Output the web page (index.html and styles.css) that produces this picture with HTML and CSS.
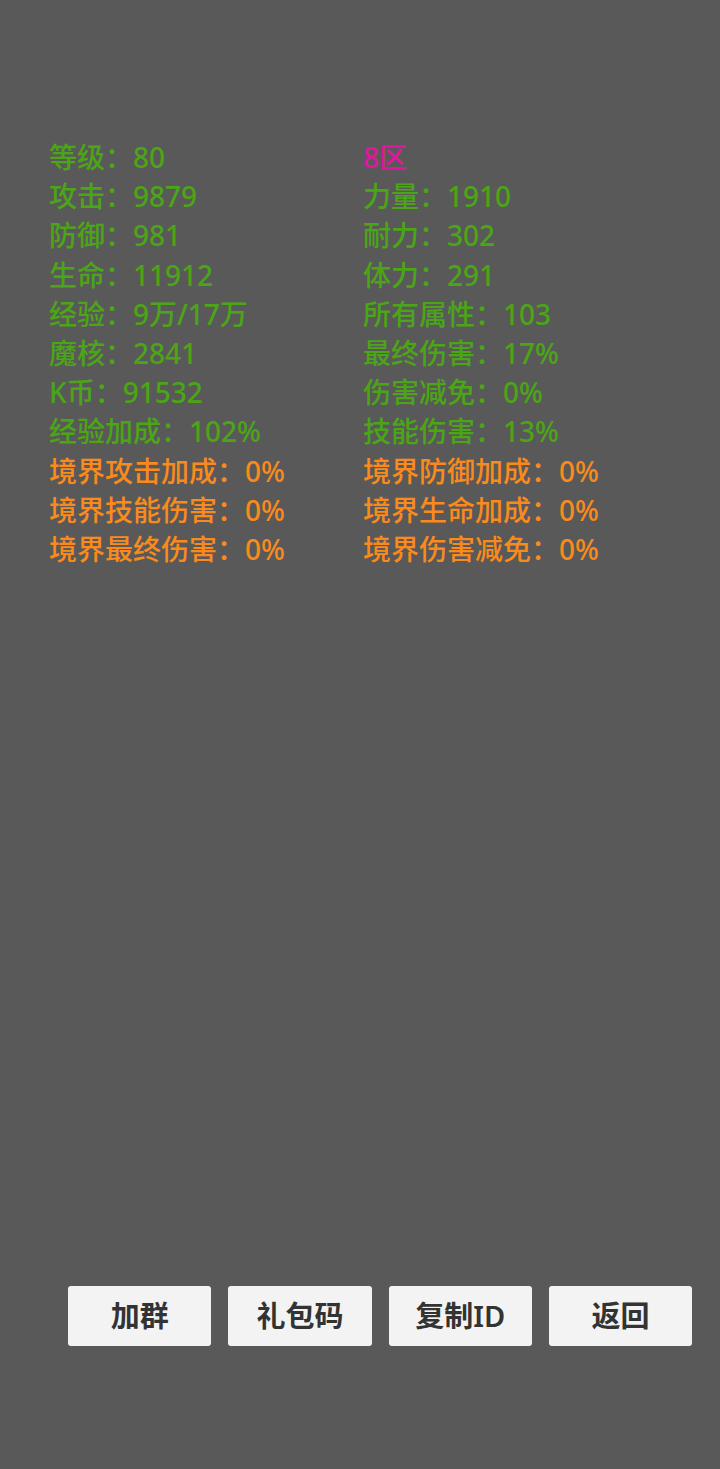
FILE: index.html
```html
<!DOCTYPE html>
<html lang="zh">
<head>
<meta charset="utf-8">
<title>角色信息</title>
<link rel="stylesheet" href="styles.css">
</head>
<body>
<div class="page">
  <div class="stats">
    <div class="cell green">等级：80</div>
    <div class="cell magenta">8区</div>
    <div class="cell green">攻击：9879</div>
    <div class="cell green">力量：1910</div>
    <div class="cell green">防御：981</div>
    <div class="cell green">耐力：302</div>
    <div class="cell green">生命：11912</div>
    <div class="cell green">体力：291</div>
    <div class="cell green">经验：9万/17万</div>
    <div class="cell green">所有属性：103</div>
    <div class="cell green">魔核：2841</div>
    <div class="cell green">最终伤害：17%</div>
    <div class="cell green">K币：91532</div>
    <div class="cell green">伤害减免：0%</div>
    <div class="cell green">经验加成：102%</div>
    <div class="cell green">技能伤害：13%</div>
    <div class="cell orange">境界攻击加成：0%</div>
    <div class="cell orange">境界防御加成：0%</div>
    <div class="cell orange">境界技能伤害：0%</div>
    <div class="cell orange">境界生命加成：0%</div>
    <div class="cell orange">境界最终伤害：0%</div>
    <div class="cell orange">境界伤害减免：0%</div>
  </div>
  <div class="actions">
    <button class="btn">加群</button>
    <button class="btn">礼包码</button>
    <button class="btn">复制ID</button>
    <button class="btn">返回</button>
  </div>
</div>
</body>
</html>
```
FILE: styles.css
```css
html, body {
  margin: 0;
  padding: 0;
  background: #595959;
}
body {
  font-family: "Noto Sans", "Noto Sans CJK SC", sans-serif;
}
.page {
  width: 720px;
  height: 1469px;
  display: flex;
  flex-direction: column;
}
.stats {
  margin-top: 138px;
  padding-left: 49px;
  display: grid;
  grid-template-columns: 314px 314px;
}
.cell {
  font-size: 28px;
  font-weight: 500;
  line-height: 39.2px;
  height: 39.2px;
  white-space: nowrap;
}
.green { color: #4ba516; }
.magenta { color: #e0159f; }
.orange { color: #f98a1c; }
.actions {
  margin-top: 717px;
  padding-left: 68px;
  display: flex;
  gap: 17px;
}
.btn {
  width: 143.3px;
  height: 59.5px;
  border: none;
  border-radius: 3px;
  background: #f3f3f3;
  color: #333333;
  font-family: "Noto Sans", "Noto Sans CJK SC", sans-serif;
  font-size: 29px;
  font-weight: 600;
  padding: 0;
  line-height: 59.5px;
}
```
